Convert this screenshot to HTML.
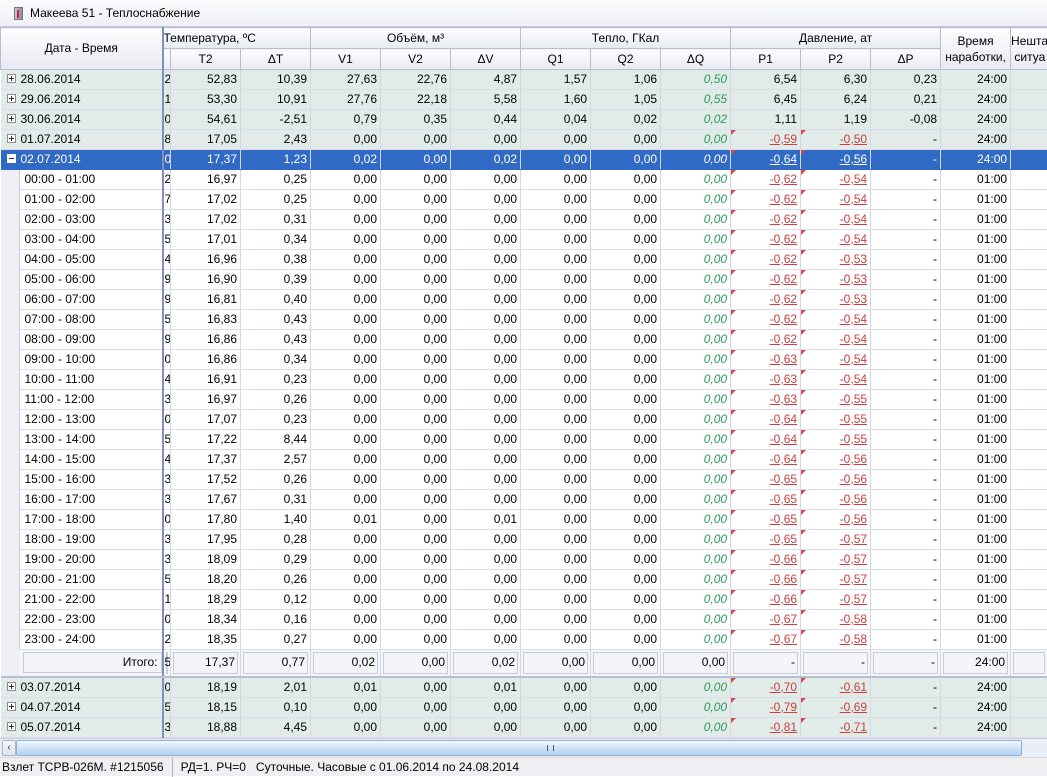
<!DOCTYPE html>
<html><head><meta charset="utf-8"><style>
*{box-sizing:border-box}
body{margin:0;width:1047px;height:776px;overflow:hidden;background:#fff;font-family:"Liberation Sans","DejaVu Sans",sans-serif;font-size:12px;color:#000;position:relative}
#title{position:absolute;left:0;top:0;width:1047px;height:27px;background:linear-gradient(#fbfbfd,#eef0f5);border-bottom:1px solid #c5c9d9;}
#title .ic{position:absolute;left:14px;top:7px;width:9px;height:13px;background:linear-gradient(to right,#c8c8d8,#8a8aa8);border:1px solid #777}
#title .ic:after{content:"";position:absolute;left:2px;top:2px;width:2px;height:8px;background:#d02020}
#title span{position:absolute;left:30px;top:6px;font-size:12px}
#grid{position:absolute;left:0;top:27px;width:1047px;height:711px;overflow:hidden}
table{border-collapse:collapse;table-layout:fixed;width:1047px}
td,th{padding:0 3px 0 0;height:20px;white-space:nowrap;overflow:hidden;text-align:right;border-right:1px solid #d4d6e4;border-bottom:1px solid #dcdcec;line-height:19px}
th{font-weight:normal;text-align:center;background:linear-gradient(#fdfdfe,#e8eaf2);border:1px solid #b9bdd2;padding:0;height:21px}
th.dt{border-right:2px solid #7f8fc0}
td.p{text-align:left;padding:0 0 0 1px;border-left:2px solid #7f8fc0;border-right:1px solid #d4d6e4}
th.p{text-align:left;border-left:2px solid #7f8fc0}
td.d{text-align:left;padding-left:6px}
td.d i{display:inline-block;width:9px;height:9px;border:1px solid #8a8a9a;margin-right:5px;position:relative;top:0px;background:#fff;font-style:normal}
td.d i:before{content:"";position:absolute;left:1px;top:3px;width:5px;height:1px;background:#333}
td.d i:after{content:"";position:absolute;left:3px;top:1px;width:1px;height:5px;background:#333}
tr.g td{background:#e1ece8}
tr.h td.d{padding-left:24px;border-bottom:none;background:linear-gradient(#dcdcec,#dcdcec) 19px 100%/100% 1px no-repeat,linear-gradient(to right,#eef0f5 18px,#c8cce0 18px,#c8cce0 19px,#fff 19px)}
td.q{font-style:italic;color:#2e9a5e}
td.r{color:#c84040;text-decoration:underline;position:relative}
td.r:before{content:"";position:absolute;left:0;top:0;border-top:5px solid #d04a4a;border-right:5px solid transparent}
tr.s td{background:#316ac5;color:#fff;border-bottom:1px solid #316ac5}
tr.s td.q,tr.s td.r{color:#fff}
tr.s td.d i{background:#fff;border-color:#fff}
tr.s td.d i:after{display:none}
tr.t td{height:27px;background:#f4f5f8;box-shadow:inset 0 0 0 2px #f4f5f8,inset 0 0 0 3px #c8cbdc;padding-right:5px;border-bottom:2px solid #b9bdd2}
#sb{position:absolute;left:0;top:738px;width:1047px;height:19px;background:#eaeef6;border-top:1px solid #c8cbdc}
#sb .a{position:absolute;left:2px;top:1px;width:14px;height:16px;background:linear-gradient(#f6f8fc,#dfe6f2);border:1px solid #aab3c8;border-radius:2px;font-size:10px;line-height:14px;text-align:center;color:#334}
#sb .t{position:absolute;left:16px;top:1px;width:1006px;height:16px;background:linear-gradient(#f4f9ff,#cfe2f7 50%,#b5d2f0);border:1px solid #8fb0d6;border-radius:2px}
#sb .t:after{content:"";position:absolute;left:530px;top:4px;width:5px;height:6px;border-left:1px solid #557;border-right:1px solid #557}
#st{position:absolute;left:0;top:757px;width:1047px;height:19px;background:#f0f0f2;border-top:1px solid #d8d8e0;font-size:12px;line-height:19px;padding-left:2px}
#st b{font-weight:normal;display:inline-block;border-right:1px solid #b0b0b8;padding-right:8px;margin-right:8px}
</style></head><body>
<div id="title"><div class="ic"></div><span>Макеева 51 - Теплоснабжение</span></div>
<div id="grid"><table>
<colgroup><col style="width:162px"><col style="width:8px"><col style="width:70px"><col style="width:70px"><col style="width:70px"><col style="width:70px"><col style="width:70px"><col style="width:70px"><col style="width:70px"><col style="width:70px"><col style="width:70px"><col style="width:70px"><col style="width:70px"><col style="width:70px"><col style="width:37px"></colgroup>
<tr><th class="dt" rowspan="2">Дата - Время</th><th colspan="3" style="text-align:left;border-left:2px solid #7f8fc0">Температура, ºС</th><th colspan="3">Объём, м³</th><th colspan="3">Тепло, ГКал</th><th colspan="3">Давление, ат</th><th rowspan="2" style="line-height:16px">Время<br>наработки,</th><th rowspan="2" style="line-height:16px;text-align:left">Нешта<br>&nbsp;ситуа</th></tr>
<tr><th class="p"></th><th>T2</th><th>ΔT</th><th>V1</th><th>V2</th><th>ΔV</th><th>Q1</th><th>Q2</th><th>ΔQ</th><th>P1</th><th>P2</th><th>ΔP</th></tr>
<tr class="g"><td class="d"><i></i>28.06.2014</td><td class="p">2</td><td>52,83</td><td>10,39</td><td>27,63</td><td>22,76</td><td>4,87</td><td>1,57</td><td>1,06</td><td class="q">0,50</td><td>6,54</td><td>6,30</td><td>0,23</td><td>24:00</td><td></td></tr>
<tr class="g"><td class="d"><i></i>29.06.2014</td><td class="p">1</td><td>53,30</td><td>10,91</td><td>27,76</td><td>22,18</td><td>5,58</td><td>1,60</td><td>1,05</td><td class="q">0,55</td><td>6,45</td><td>6,24</td><td>0,21</td><td>24:00</td><td></td></tr>
<tr class="g"><td class="d"><i></i>30.06.2014</td><td class="p">0</td><td>54,61</td><td>-2,51</td><td>0,79</td><td>0,35</td><td>0,44</td><td>0,04</td><td>0,02</td><td class="q">0,02</td><td>1,11</td><td>1,19</td><td>-0,08</td><td>24:00</td><td></td></tr>
<tr class="g"><td class="d"><i></i>01.07.2014</td><td class="p">8</td><td>17,05</td><td>2,43</td><td>0,00</td><td>0,00</td><td>0,00</td><td>0,00</td><td>0,00</td><td class="q">0,00</td><td class="r">-0,59</td><td class="r">-0,50</td><td>-</td><td>24:00</td><td></td></tr>
<tr class="s"><td class="d"><i></i>02.07.2014</td><td class="p">0</td><td>17,37</td><td>1,23</td><td>0,02</td><td>0,00</td><td>0,02</td><td>0,00</td><td>0,00</td><td class="q">0,00</td><td class="r">-0,64</td><td class="r">-0,56</td><td>-</td><td>24:00</td><td></td></tr>
<tr class="h"><td class="d">00:00 - 01:00</td><td class="p">2</td><td>16,97</td><td>0,25</td><td>0,00</td><td>0,00</td><td>0,00</td><td>0,00</td><td>0,00</td><td class="q">0,00</td><td class="r">-0,62</td><td class="r">-0,54</td><td>-</td><td>01:00</td><td></td></tr>
<tr class="h"><td class="d">01:00 - 02:00</td><td class="p">7</td><td>17,02</td><td>0,25</td><td>0,00</td><td>0,00</td><td>0,00</td><td>0,00</td><td>0,00</td><td class="q">0,00</td><td class="r">-0,62</td><td class="r">-0,54</td><td>-</td><td>01:00</td><td></td></tr>
<tr class="h"><td class="d">02:00 - 03:00</td><td class="p">3</td><td>17,02</td><td>0,31</td><td>0,00</td><td>0,00</td><td>0,00</td><td>0,00</td><td>0,00</td><td class="q">0,00</td><td class="r">-0,62</td><td class="r">-0,54</td><td>-</td><td>01:00</td><td></td></tr>
<tr class="h"><td class="d">03:00 - 04:00</td><td class="p">5</td><td>17,01</td><td>0,34</td><td>0,00</td><td>0,00</td><td>0,00</td><td>0,00</td><td>0,00</td><td class="q">0,00</td><td class="r">-0,62</td><td class="r">-0,54</td><td>-</td><td>01:00</td><td></td></tr>
<tr class="h"><td class="d">04:00 - 05:00</td><td class="p">4</td><td>16,96</td><td>0,38</td><td>0,00</td><td>0,00</td><td>0,00</td><td>0,00</td><td>0,00</td><td class="q">0,00</td><td class="r">-0,62</td><td class="r">-0,53</td><td>-</td><td>01:00</td><td></td></tr>
<tr class="h"><td class="d">05:00 - 06:00</td><td class="p">9</td><td>16,90</td><td>0,39</td><td>0,00</td><td>0,00</td><td>0,00</td><td>0,00</td><td>0,00</td><td class="q">0,00</td><td class="r">-0,62</td><td class="r">-0,53</td><td>-</td><td>01:00</td><td></td></tr>
<tr class="h"><td class="d">06:00 - 07:00</td><td class="p">9</td><td>16,81</td><td>0,40</td><td>0,00</td><td>0,00</td><td>0,00</td><td>0,00</td><td>0,00</td><td class="q">0,00</td><td class="r">-0,62</td><td class="r">-0,53</td><td>-</td><td>01:00</td><td></td></tr>
<tr class="h"><td class="d">07:00 - 08:00</td><td class="p">5</td><td>16,83</td><td>0,43</td><td>0,00</td><td>0,00</td><td>0,00</td><td>0,00</td><td>0,00</td><td class="q">0,00</td><td class="r">-0,62</td><td class="r">-0,54</td><td>-</td><td>01:00</td><td></td></tr>
<tr class="h"><td class="d">08:00 - 09:00</td><td class="p">9</td><td>16,86</td><td>0,43</td><td>0,00</td><td>0,00</td><td>0,00</td><td>0,00</td><td>0,00</td><td class="q">0,00</td><td class="r">-0,62</td><td class="r">-0,54</td><td>-</td><td>01:00</td><td></td></tr>
<tr class="h"><td class="d">09:00 - 10:00</td><td class="p">0</td><td>16,86</td><td>0,34</td><td>0,00</td><td>0,00</td><td>0,00</td><td>0,00</td><td>0,00</td><td class="q">0,00</td><td class="r">-0,63</td><td class="r">-0,54</td><td>-</td><td>01:00</td><td></td></tr>
<tr class="h"><td class="d">10:00 - 11:00</td><td class="p">4</td><td>16,91</td><td>0,23</td><td>0,00</td><td>0,00</td><td>0,00</td><td>0,00</td><td>0,00</td><td class="q">0,00</td><td class="r">-0,63</td><td class="r">-0,54</td><td>-</td><td>01:00</td><td></td></tr>
<tr class="h"><td class="d">11:00 - 12:00</td><td class="p">3</td><td>16,97</td><td>0,26</td><td>0,00</td><td>0,00</td><td>0,00</td><td>0,00</td><td>0,00</td><td class="q">0,00</td><td class="r">-0,63</td><td class="r">-0,55</td><td>-</td><td>01:00</td><td></td></tr>
<tr class="h"><td class="d">12:00 - 13:00</td><td class="p">0</td><td>17,07</td><td>0,23</td><td>0,00</td><td>0,00</td><td>0,00</td><td>0,00</td><td>0,00</td><td class="q">0,00</td><td class="r">-0,64</td><td class="r">-0,55</td><td>-</td><td>01:00</td><td></td></tr>
<tr class="h"><td class="d">13:00 - 14:00</td><td class="p">5</td><td>17,22</td><td>8,44</td><td>0,00</td><td>0,00</td><td>0,00</td><td>0,00</td><td>0,00</td><td class="q">0,00</td><td class="r">-0,64</td><td class="r">-0,55</td><td>-</td><td>01:00</td><td></td></tr>
<tr class="h"><td class="d">14:00 - 15:00</td><td class="p">4</td><td>17,37</td><td>2,57</td><td>0,00</td><td>0,00</td><td>0,00</td><td>0,00</td><td>0,00</td><td class="q">0,00</td><td class="r">-0,64</td><td class="r">-0,56</td><td>-</td><td>01:00</td><td></td></tr>
<tr class="h"><td class="d">15:00 - 16:00</td><td class="p">3</td><td>17,52</td><td>0,26</td><td>0,00</td><td>0,00</td><td>0,00</td><td>0,00</td><td>0,00</td><td class="q">0,00</td><td class="r">-0,65</td><td class="r">-0,56</td><td>-</td><td>01:00</td><td></td></tr>
<tr class="h"><td class="d">16:00 - 17:00</td><td class="p">3</td><td>17,67</td><td>0,31</td><td>0,00</td><td>0,00</td><td>0,00</td><td>0,00</td><td>0,00</td><td class="q">0,00</td><td class="r">-0,65</td><td class="r">-0,56</td><td>-</td><td>01:00</td><td></td></tr>
<tr class="h"><td class="d">17:00 - 18:00</td><td class="p">0</td><td>17,80</td><td>1,40</td><td>0,01</td><td>0,00</td><td>0,01</td><td>0,00</td><td>0,00</td><td class="q">0,00</td><td class="r">-0,65</td><td class="r">-0,56</td><td>-</td><td>01:00</td><td></td></tr>
<tr class="h"><td class="d">18:00 - 19:00</td><td class="p">3</td><td>17,95</td><td>0,28</td><td>0,00</td><td>0,00</td><td>0,00</td><td>0,00</td><td>0,00</td><td class="q">0,00</td><td class="r">-0,65</td><td class="r">-0,57</td><td>-</td><td>01:00</td><td></td></tr>
<tr class="h"><td class="d">19:00 - 20:00</td><td class="p">3</td><td>18,09</td><td>0,29</td><td>0,00</td><td>0,00</td><td>0,00</td><td>0,00</td><td>0,00</td><td class="q">0,00</td><td class="r">-0,66</td><td class="r">-0,57</td><td>-</td><td>01:00</td><td></td></tr>
<tr class="h"><td class="d">20:00 - 21:00</td><td class="p">5</td><td>18,20</td><td>0,26</td><td>0,00</td><td>0,00</td><td>0,00</td><td>0,00</td><td>0,00</td><td class="q">0,00</td><td class="r">-0,66</td><td class="r">-0,57</td><td>-</td><td>01:00</td><td></td></tr>
<tr class="h"><td class="d">21:00 - 22:00</td><td class="p">1</td><td>18,29</td><td>0,12</td><td>0,00</td><td>0,00</td><td>0,00</td><td>0,00</td><td>0,00</td><td class="q">0,00</td><td class="r">-0,66</td><td class="r">-0,57</td><td>-</td><td>01:00</td><td></td></tr>
<tr class="h"><td class="d">22:00 - 23:00</td><td class="p">0</td><td>18,34</td><td>0,16</td><td>0,00</td><td>0,00</td><td>0,00</td><td>0,00</td><td>0,00</td><td class="q">0,00</td><td class="r">-0,67</td><td class="r">-0,58</td><td>-</td><td>01:00</td><td></td></tr>
<tr class="h"><td class="d">23:00 - 24:00</td><td class="p">2</td><td>18,35</td><td>0,27</td><td>0,00</td><td>0,00</td><td>0,00</td><td>0,00</td><td>0,00</td><td class="q">0,00</td><td class="r">-0,67</td><td class="r">-0,58</td><td>-</td><td>01:00</td><td></td></tr>
<tr class="t"><td style="background:linear-gradient(to right,#eef0f5 18px,#f4f5f8 18px);box-shadow:inset 0 0 0 0 #000;padding:0"><div style="margin-left:22px;height:21px;border:1px solid #c8cbdc;text-align:right;padding-right:3px;line-height:19px">Итого:</div></td><td class="p">5</td><td>17,37</td><td>0,77</td><td>0,02</td><td>0,00</td><td>0,02</td><td>0,00</td><td>0,00</td><td>0,00</td><td>-</td><td>-</td><td>-</td><td>24:00</td><td></td></tr>
<tr class="g"><td class="d"><i></i>03.07.2014</td><td class="p">0</td><td>18,19</td><td>2,01</td><td>0,01</td><td>0,00</td><td>0,01</td><td>0,00</td><td>0,00</td><td class="q">0,00</td><td class="r">-0,70</td><td class="r">-0,61</td><td>-</td><td>24:00</td><td></td></tr>
<tr class="g"><td class="d"><i></i>04.07.2014</td><td class="p">5</td><td>18,15</td><td>0,10</td><td>0,00</td><td>0,00</td><td>0,00</td><td>0,00</td><td>0,00</td><td class="q">0,00</td><td class="r">-0,79</td><td class="r">-0,69</td><td>-</td><td>24:00</td><td></td></tr>
<tr class="g"><td class="d"><i></i>05.07.2014</td><td class="p">3</td><td>18,88</td><td>4,45</td><td>0,00</td><td>0,00</td><td>0,00</td><td>0,00</td><td>0,00</td><td class="q">0,00</td><td class="r">-0,81</td><td class="r">-0,71</td><td>-</td><td>24:00</td><td></td></tr>
<tr class="g"><td class="d"></td><td class="p"></td><td></td><td></td><td></td><td></td><td></td><td></td><td></td><td></td><td class="r"></td><td class="r"></td><td></td><td></td><td></td></tr>
</table></div>
<div id="sb"><div class="a">&lsaquo;</div><div class="t"></div></div>
<div id="st"><b>Взлет ТСРВ-026М. #1215056</b>РД=1. РЧ=0 &nbsp; Суточные. Часовые с 01.06.2014 по 24.08.2014</div>
</body></html>
